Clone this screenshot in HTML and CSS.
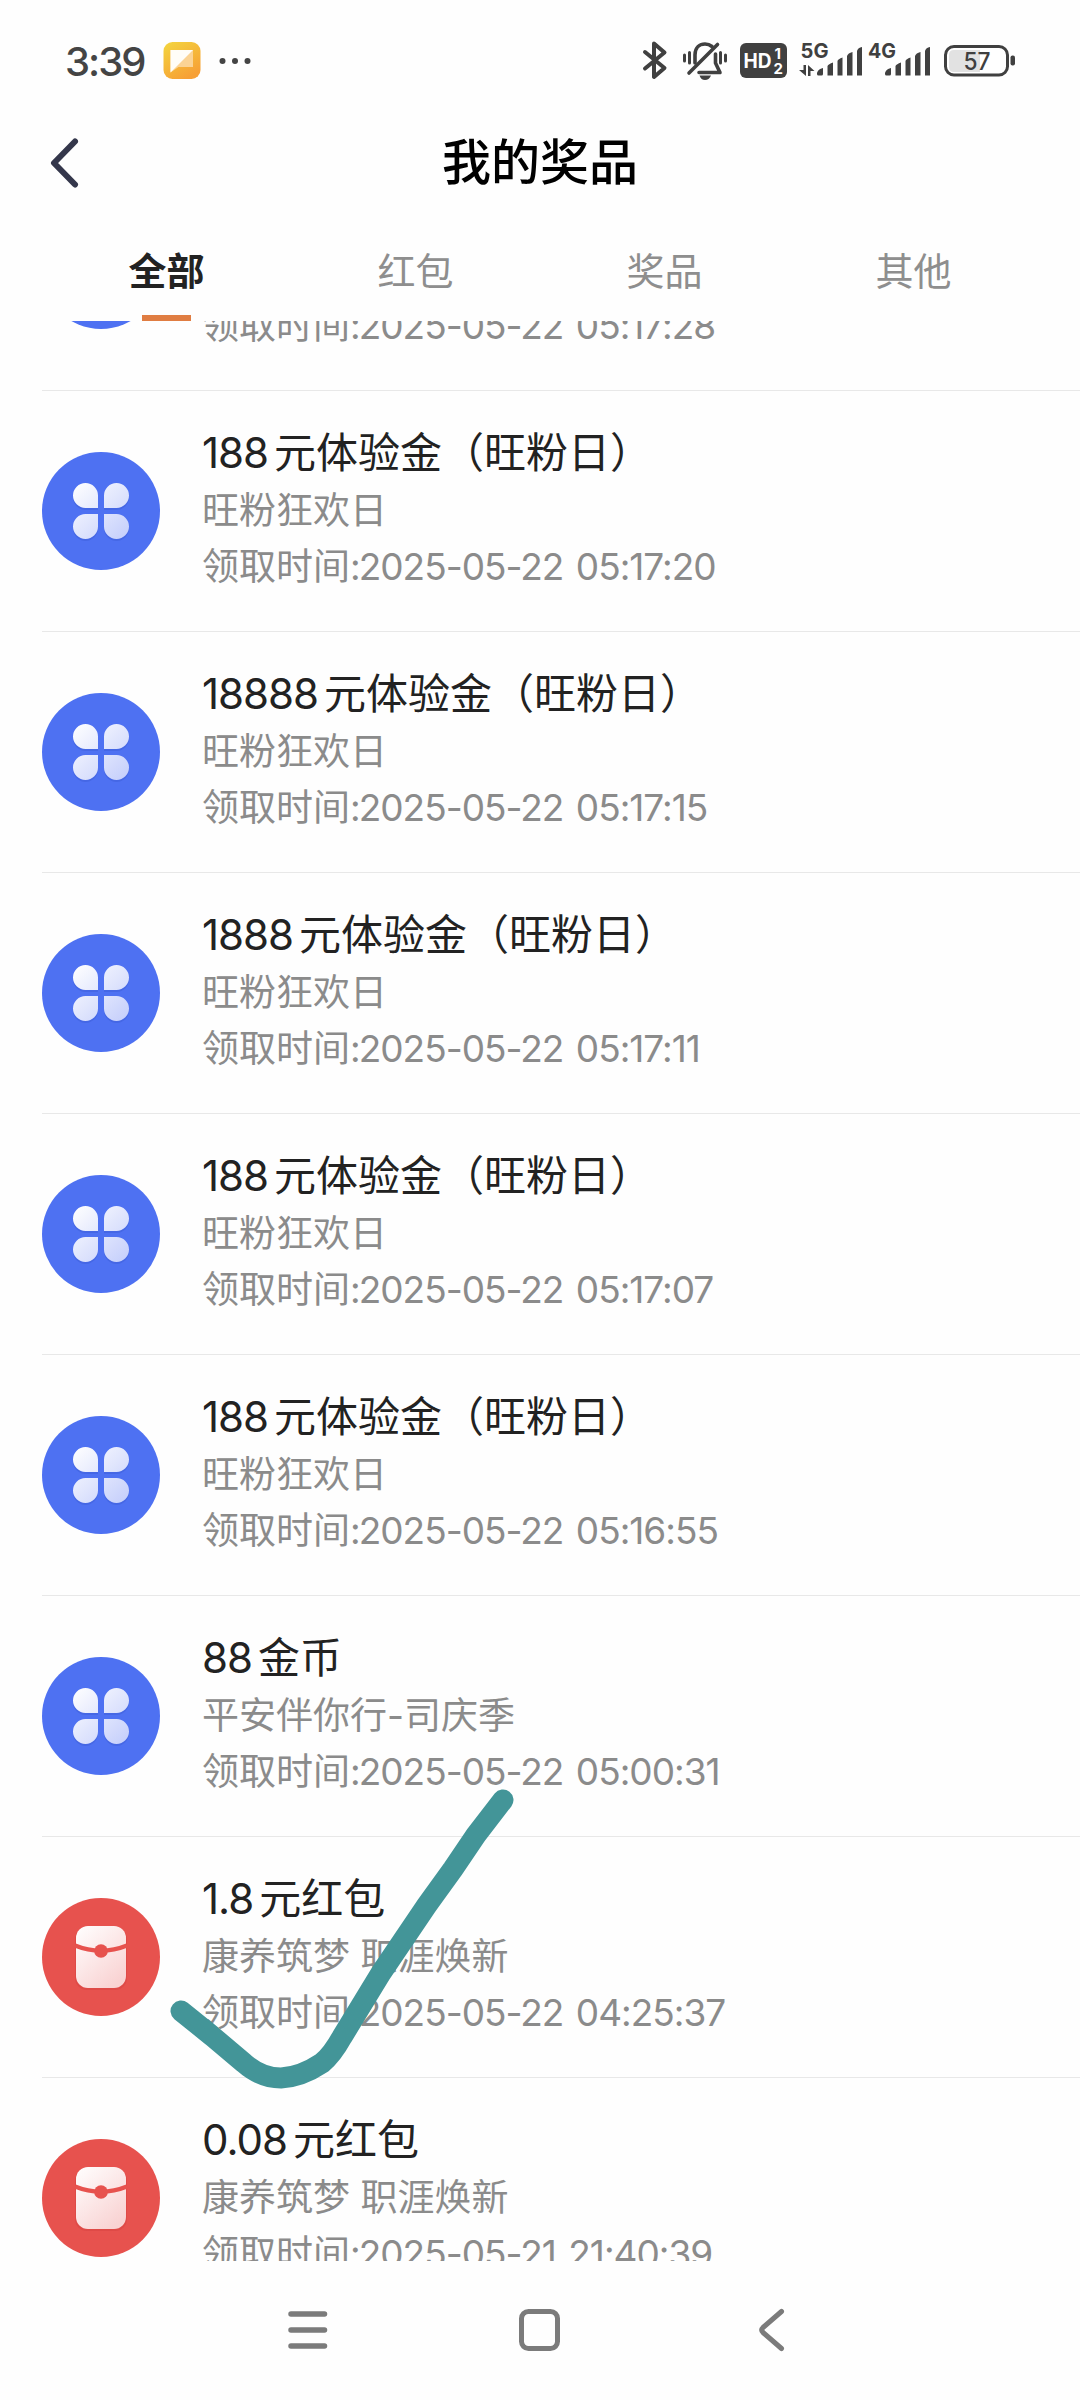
FILE: index.html
```html
<!DOCTYPE html>
<html lang="zh-CN">
<head>
    <meta charset="UTF-8">
    <meta name="viewport" content="width=device-width, initial-scale=1.0">
    <title>我的奖品</title>
    <link rel="stylesheet" href="styles.css">
</head>
<body>
<!-- shared icons -->
<svg class="defs" width="0" height="0">
    <defs>
        <linearGradient id="petal-fill" gradientUnits="userSpaceOnUse" x1="32" y1="30" x2="86" y2="88">
            <stop offset="0" stop-color="#ffffff"/>
            <stop offset="1" stop-color="#c3cdfb"/>
        </linearGradient>
        <linearGradient id="packet-fill" x1="0" y1="0" x2="0.7" y2="1">
            <stop offset="0" stop-color="#ffffff"/>
            <stop offset="1" stop-color="#f9d3d3"/>
        </linearGradient>
        <linearGradient id="app-fill" x1="0" y1="0" x2="0.6" y2="1">
            <stop offset="0" stop-color="#f3d63f"/>
            <stop offset="1" stop-color="#f7a035"/>
        </linearGradient>
    </defs>
    <symbol id="icon-clover" viewBox="0 0 118 118">
        <circle cx="59" cy="59" r="59" fill="#4e71f2"/>
        <g fill="#3f60dc" opacity="0.6" transform="translate(0 2)">
            <path d="M56 56H43.500a12.500 12.500 0 1 1 12.500-12.500zM62 56V43.500a12.500 12.500 0 1 1 12.500 12.500zM56 62V74.500a12.500 12.500 0 1 1-12.500-12.500zM62 62H74.500a12.500 12.500 0 1 1-12.500 12.500z"/>
        </g>
        <path fill="url(#petal-fill)" d="M56 56H43.500a12.500 12.500 0 1 1 12.500-12.500zM62 56V43.500a12.500 12.500 0 1 1 12.500 12.500zM56 62V74.500a12.500 12.500 0 1 1-12.500-12.500zM62 62H74.500a12.500 12.500 0 1 1-12.500 12.500z"/>
    </symbol>
    <symbol id="icon-packet" viewBox="0 0 118 118">
        <circle cx="59" cy="59" r="59" fill="#e7524e"/>
        <rect x="33" y="29" width="52" height="63" rx="12" fill="#d8413f" opacity="0.5"/>
        <rect x="34" y="28" width="50" height="62" rx="12" fill="url(#packet-fill)"/>
        <path d="M33 47.500Q59 58 85 47.500" fill="none" stroke="#e7524e" stroke-width="4.500"/>
        <circle cx="59" cy="53" r="6.8" fill="#e7524e"/>
    </symbol>
</svg>

<div class="status-bar">
    <div class="status-left">
        <span class="clock">3:39</span>
        <svg class="app-icon" width="38" height="38" viewBox="0 0 38 38">
            <rect x="0.5" y="0" width="37" height="37" rx="9" fill="url(#app-fill)"/>
            <path d="M7.500 8H30V25H15.500L7.500 30.500z" fill="#fbd394"/>
            <path d="M7.500 8H30L7.500 30.500z" fill="#fffdf8"/>
        </svg>
        <svg class="more-dots" width="32" height="8" viewBox="0 0 32 8" fill="#444">
            <circle cx="3.500" cy="4" r="3"/><circle cx="16" cy="4" r="3"/><circle cx="28.500" cy="4" r="3"/>
        </svg>
    </div>
    <svg class="status-icons" width="380" height="44" viewBox="640 38 380 44">
        <!-- bluetooth -->
        <path d="M645 51L664.500 67L654 76V42.500L664.500 51.500L645 67.500" fill="none" stroke="#404040" stroke-width="4" stroke-linecap="round" stroke-linejoin="round"/>
        <!-- muted bell -->
        <g fill="none" stroke="#404040" stroke-width="3.600" stroke-linecap="round" stroke-linejoin="round">
            <path d="M695 62V54C695 46 700 43 705 43Q709 43 712 45.500M715.500 53V62L720 71.500H699"/>
            <path d="M717.500 43.500L689 72"/>
            <path stroke-width="3" d="M684.500 54V60M689.500 51.500V62M720.500 51.500V62M725.500 54V60"/>
        </g>
        <path d="M699.500 74.500H711Q709 79 705 79T699.500 74.500z" fill="#404040"/>
        <!-- HD badge -->
        <rect x="740" y="42" width="47" height="35" rx="6" fill="#404040"/>
        <text class="hd-text" x="743.500" y="67" textLength="28" lengthAdjust="spacingAndGlyphs">HD</text>
        <text class="hd-num" x="774.500" y="58">1</text>
        <text class="hd-num" x="773.500" y="72.500">2</text>
        <!-- signals -->
        <text class="net-text" x="800.500" y="57" textLength="28" lengthAdjust="spacingAndGlyphs">5G</text>
        <text class="net-text" x="868" y="57" textLength="28" lengthAdjust="spacingAndGlyphs">4G</text>
        <g fill="#404040">
            <path d="M803.500 64H806V75L799 69H803.500zM808 64L814.500 70H810.500V75H808z"/>
            <path id="bars" d="M817 72Q818 68 823 67V73Q823 74.500 821.500 74.500H818.500Q817 74.500 817 73zM827.500 65Q828.500 63 833 61.500V74.500H827.500zM837.500 60Q838 58 842.500 56.500V74.500H837.500zM847 55Q848 52 852.500 51V74.500H847zM857 50Q858 46.500 862 46V74.500H857z"/>
            <use href="#bars" x="68"/>
        </g>
        <!-- battery -->
        <rect x="945.500" y="45.500" width="62" height="28.500" rx="8.500" fill="#fff" stroke="#404040" stroke-width="3"/>
        <path d="M954 49H980V71H954Q949 71 949 66V54Q949 49 954 49z" fill="#e2e2e2"/>
        <rect x="1010.500" y="54.500" width="4.500" height="10" rx="2" fill="#404040"/>
        <text class="battery-text" x="963.500" y="69" textLength="27" lengthAdjust="spacingAndGlyphs">57</text>
    </svg>
</div>

<div class="header">
    <svg class="back" width="30" height="54" viewBox="0 0 30 54">
        <path d="M25 4.500L4 26L25 47.500" fill="none" stroke="#34374b" stroke-width="6" stroke-linecap="round" stroke-linejoin="round"/>
    </svg>
    <h1>我的奖品</h1>
</div>

<div class="tabs">
    <div class="tab active">全部</div>
    <div class="tab">红包</div>
    <div class="tab">奖品</div>
    <div class="tab">其他</div>
</div>

<div class="list">
    <div class="row">
        <svg class="icon"><use href="#icon-clover"/></svg>
        <div class="info">
            <h2><span class="num">188</span>元体验金（旺粉日）</h2>
            <p>旺粉狂欢日</p>
            <p>领取时间:<time>2025-05-22 05:17:28</time></p>
        </div>
    </div>
    <div class="row">
        <svg class="icon"><use href="#icon-clover"/></svg>
        <div class="info">
            <h2><span class="num">188</span>元体验金（旺粉日）</h2>
            <p>旺粉狂欢日</p>
            <p>领取时间:<time>2025-05-22 05:17:20</time></p>
        </div>
    </div>
    <div class="row">
        <svg class="icon"><use href="#icon-clover"/></svg>
        <div class="info">
            <h2><span class="num">18888</span>元体验金（旺粉日）</h2>
            <p>旺粉狂欢日</p>
            <p>领取时间:<time>2025-05-22 05:17:15</time></p>
        </div>
    </div>
    <div class="row">
        <svg class="icon"><use href="#icon-clover"/></svg>
        <div class="info">
            <h2><span class="num">1888</span>元体验金（旺粉日）</h2>
            <p>旺粉狂欢日</p>
            <p>领取时间:<time>2025-05-22 05:17:11</time></p>
        </div>
    </div>
    <div class="row">
        <svg class="icon"><use href="#icon-clover"/></svg>
        <div class="info">
            <h2><span class="num">188</span>元体验金（旺粉日）</h2>
            <p>旺粉狂欢日</p>
            <p>领取时间:<time>2025-05-22 05:17:07</time></p>
        </div>
    </div>
    <div class="row">
        <svg class="icon"><use href="#icon-clover"/></svg>
        <div class="info">
            <h2><span class="num">188</span>元体验金（旺粉日）</h2>
            <p>旺粉狂欢日</p>
            <p>领取时间:<time>2025-05-22 05:16:55</time></p>
        </div>
    </div>
    <div class="row">
        <svg class="icon"><use href="#icon-clover"/></svg>
        <div class="info">
            <h2><span class="num">88</span>金币</h2>
            <p>平安伴你行-司庆季</p>
            <p>领取时间:<time>2025-05-22 05:00:31</time></p>
        </div>
    </div>
    <div class="row">
        <svg class="icon"><use href="#icon-packet"/></svg>
        <div class="info">
            <h2><span class="num">1.8</span>元红包</h2>
            <p>康养筑梦 职涯焕新</p>
            <p>领取时间:<time>2025-05-22 04:25:37</time></p>
        </div>
    </div>
    <div class="row">
        <svg class="icon"><use href="#icon-packet"/></svg>
        <div class="info">
            <h2><span class="num">0.08</span>元红包</h2>
            <p>康养筑梦 职涯焕新</p>
            <p>领取时间:<time>2025-05-21 21:40:39</time></p>
        </div>
    </div>
</div>

<div class="nav-bar">
    <svg width="44" height="44" viewBox="0 0 44 44" fill="none" stroke="#7b7b7b" stroke-width="5.500" stroke-linecap="round">
        <path d="M6 6H39.500M6 22H39.500M6 38H39.500"/>
    </svg>
    <svg width="44" height="44" viewBox="0 0 44 44" fill="none" stroke="#7b7b7b" stroke-width="5">
        <rect x="3.500" y="3.500" width="36" height="37" rx="7"/>
    </svg>
    <svg width="44" height="44" viewBox="0 0 44 44" fill="none" stroke="#7b7b7b" stroke-width="5" stroke-linecap="round" stroke-linejoin="round">
        <path d="M30.500 3.500L12 19.500Q9.500 22 12 24.500L30.500 40.500"/>
    </svg>
</div>

<!-- hand drawn check mark over the list -->
<svg class="mark" width="360" height="320" viewBox="160 1780 360 320">
    <path d="M181 2011L212 2036L244 2063Q261 2078 281 2078Q301 2077 322 2063Q332 2055 342 2037L381 1973L427 1905L453 1869L476 1835L503 1800" fill="none" stroke="#439598" stroke-width="21" stroke-linecap="round" stroke-linejoin="round"/>
</svg>
</body>
</html>
```
FILE: styles.css
```css
* {
    box-sizing: border-box;
}
body {
    margin: 0;
    width: 1080px;
    height: 2400px;
    position: relative;
    overflow: hidden;
    display: flex;
    flex-direction: column;
    background: #fefefe;
    font-family: Inter, "Noto Sans CJK SC", sans-serif;
}
.defs {
    display: block;
}
.status-bar {
    height: 112px;
    padding: 10px 60px 0 65px;
    display: flex;
    justify-content: space-between;
    align-items: center;
    color: #444;
}
.status-left {
    display: flex;
    align-items: center;
    height: 100%;
}
.clock {
    width: 98px;
    font-size: 40px;
    font-weight: 500;
    letter-spacing: -2px;
}
.more-dots {
    margin-left: 18px;
}
.hd-text {
    fill: #fff;
    font-size: 20px;
    font-weight: 700;
}
.hd-num {
    fill: #fff;
    font-size: 15px;
    font-weight: 700;
}
.net-text {
    fill: #404040;
    font-size: 20px;
    font-weight: 700;
}
.battery-text {
    fill: #404040;
    font-size: 24px;
    font-weight: 500;
}
.header {
    height: 104px;
    padding: 0 50px;
    display: grid;
    grid-template-columns: 30px 1fr 30px;
    align-items: center;
}
.header h1 {
    margin: -2px 0 0;
    text-align: center;
    font-size: 49px;
    font-weight: 500;
    line-height: 72px;
    color: #000;
}
.tabs {
    height: 105px;
    padding: 0 42px;
    display: grid;
    grid-template-columns: repeat(4, 249px);
}
.tab {
    display: flex;
    flex-direction: column;
    align-items: center;
    font-size: 38px;
    line-height: 110px;
    color: #8e8e8e;
}
.tab.active {
    font-weight: 700;
    color: #222;
}
.tab.active::after {
    content: "";
    width: 49px;
    height: 6px;
    margin-top: -11px;
    background: #e07d42;
}
.list {
    height: 1940px;
    overflow: hidden;
    padding-left: 42px;
}
.row {
    height: 241px;
    padding-top: 31px;
    display: flex;
    gap: 42px;
    border-bottom: 1px solid #e8e8e8;
}
/* list is scrolled, first record is mostly hidden */
.row:first-child {
    margin-top: -171px;
}
.icon {
    width: 118px;
    height: 118px;
    margin-top: 30px;
}
.info h2 {
    margin: 0;
    font-size: 42px;
    font-weight: 400;
    line-height: 61px;
    color: #222;
}
.num {
    letter-spacing: -1px;
    margin-right: 6px;
}
.info p {
    margin: 0;
    font-size: 37px;
    line-height: 56px;
    color: #8b8b8b;
    white-space: nowrap;
}
.info time {
    margin-left: -2px;
    letter-spacing: -1px;
    word-spacing: 3px;
}
.nav-bar {
    height: 139px;
    padding: 0 285px 2px;
    display: flex;
    justify-content: space-between;
    align-items: center;
}
.mark {
    position: absolute;
    left: 160px;
    top: 1780px;
}
```
